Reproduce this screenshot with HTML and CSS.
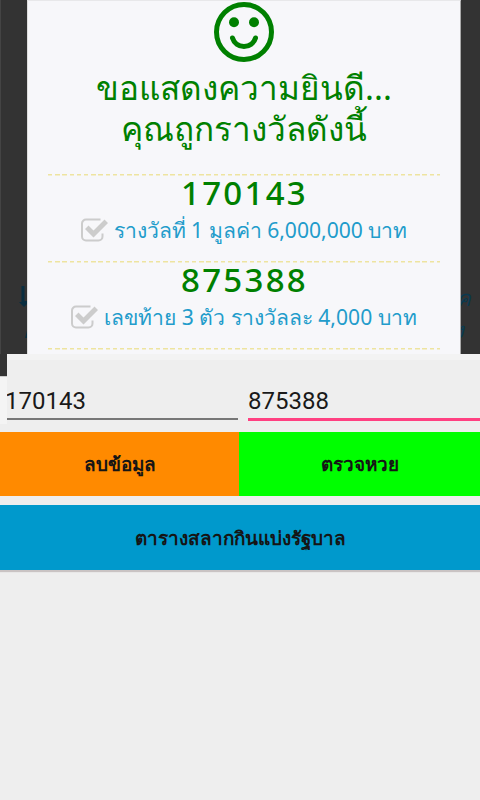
FILE: index.html
```html
<!DOCTYPE html>
<html lang="th">
<head>
<meta charset="utf-8">
<title>ตรวจหวย</title>
<link rel="stylesheet" href="styles.css">
</head>
<body>
<main class="screen">
  <section class="web">
    <div class="shade left"><svg class="arrow" viewBox="0 0 8 23"><path d="M2.500 1h3v15h2.500v3L5 22 0 17h2.500z"/></svg><i class="peek"></i></div>
    <div class="dialog">
      <svg class="smile" viewBox="0 0 60 60"><circle cx="30" cy="30" r="27.5"/><path d="M18.500 36a12 12 0 0 0 23 0"/><circle class="eye" cx="20" cy="20.2" r="5"/><circle class="eye" cx="40" cy="20.2" r="5"/></svg>
      <h1 class="title">ขอแสดงความยินดี...<br>คุณถูกรางวัลดังนี้</h1>
      <div class="prize">
        <div class="number">170143</div>
        <div class="detail"><svg class="check" viewBox="0 0 27 24"><path class="box" d="M19.500 1.500H5A4 4 0 0 0 1 5.500V18.500a4 4 0 0 0 4 4H17.500a4 4 0 0 0 4-4V15.500"/><path class="tick" d="M4 11l3.500-3.500 5 5L23.500 1.500 27 5 12.500 19.500z"/></svg><span>รางวัลที่ 1 มูลค่า 6,000,000 บาท</span></div>
      </div>
      <div class="prize">
        <div class="number">875388</div>
        <div class="detail"><svg class="check" viewBox="0 0 27 24"><path class="box" d="M19.500 1.500H5A4 4 0 0 0 1 5.500V18.500a4 4 0 0 0 4 4H17.500a4 4 0 0 0 4-4V15.500"/><path class="tick" d="M4 11l3.500-3.500 5 5L23.500 1.500 27 5 12.500 19.500z"/></svg><span>เลขท้าย 3 ตัว รางวัลละ 4,000 บาท</span></div>
      </div>
      <div class="prize"></div>
    </div>
    <div class="shade right"><span>ค</span><span>ง</span></div>
  </section>
  <section class="form">
    <div class="edge"></div>
    <div class="fields">
      <div class="field one">170143</div>
      <div class="field two">875388</div>
    </div>
  </section>
  <div class="actions">
    <button class="btn clear">ลบข้อมูล</button>
    <button class="btn verify">ตรวจหวย</button>
  </div>
  <button class="btn table">ตารางสลากกินแบ่งรัฐบาล</button>
</main>
</body>
</html>
```
FILE: styles.css
```css
* { box-sizing: border-box; }
body { margin: 0; background: #eee; font-family: "Noto Sans", sans-serif; }
.screen { width: 480px; height: 800px; overflow: hidden; background: #eee; }
.web { display: flex; height: 354px; overflow: hidden; background: #333; }
.shade { background: #333; overflow: hidden; flex: none; }
.left { width: 27px; border-left: 1px solid #444; padding: 285px 0 0 18px; }
.arrow { display: block; width: 8px; height: 23px; fill: #0a2e40; }
.peek { display: block; width: 2px; height: 7px; margin: 23px 0 0 7px; background: #0a2e40; transform: skewX(-15deg); }
.right { width: 19px; padding-top: 281px; color: #0a3a50; font-size: 22px; font-style: italic; line-height: 32px; }
.right span { display: block; margin-left: -5px; }
.right span + span { margin-left: -8px; }
.dialog { width: 434px; height: 354px; padding: 1px 20px 0; background: #f7f7fa; border-top: 1px solid #e8e8ea; border-left: 1px solid #ddd; border-right: 1px solid #aaa; text-align: center; overflow: hidden; flex: none; }
.smile { display: block; width: 60px; height: 60px; margin: 0 auto; fill: none; stroke: green; stroke-width: 5; stroke-linecap: round; }
.smile .eye { fill: green; stroke: none; }
.title { height: 112px; margin: 0; padding-top: 5px; color: green; font-size: 33.300px; font-weight: 400; line-height: 41px; white-space: nowrap; }
.prize { height: 87px; background: repeating-linear-gradient(90deg, #eee4a0 0 4.5px, transparent 4.5px 7.2px) top / 100% 1.500px no-repeat; }
.number { height: 38px; padding-left: 1px; color: green; font-size: 33px; font-weight: 500; line-height: 37px; letter-spacing: 2.300px; }
.detail { display: flex; justify-content: center; align-items: center; gap: 6px; height: 35px; color: #229ccb; font-size: 21.100px; line-height: 35px; white-space: nowrap; }
.check { width: 27px; height: 24px; flex: none; }
.box { fill: none; stroke: #ccc; stroke-width: 2; }
.tick { fill: #ccc; }
.form { display: flex; height: 78px; }
.edge { width: 7px; height: 70px; background: linear-gradient(#333 22px, #ccc 22px 23px, #f4f4f4 23px); }
.fields { display: grid; grid-template-columns: 231px 232px; column-gap: 10px; width: 473px; padding-top: 31px; overflow: hidden; border-top: 6px solid #f3f3f3; }
.field { height: 30px; color: #191919; font-family: Roboto, sans-serif; font-size: 24px; line-height: 20px; border-bottom: 2px solid #777; }
.one { height: 29px; text-indent: -2px; }
.two { border-bottom: 3px solid #ff4081; }
.actions { display: flex; height: 64px; }
.btn { display: block; border: 0; padding: 0; color: #151515; font-family: "Noto Sans", sans-serif; font-size: 18.900px; font-weight: 700; line-height: 64px; height: 64px; white-space: nowrap; }
.clear { width: 239px; background: #ff8a00; }
.verify { width: 241px; background: #0f0; }
.table { width: 480px; margin-top: 9px; height: 65px; background: #09c; box-shadow: 0 2px 1px #c9c3c3; }
```
